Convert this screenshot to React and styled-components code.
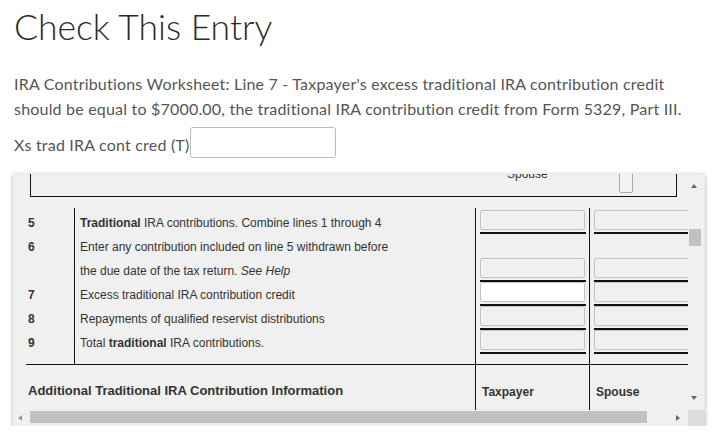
import React from "react";
import styled, { createGlobalStyle } from "styled-components";

const GlobalStyle = createGlobalStyle`
  html, body {
    margin: 0;
    padding: 0;
    background: #fff;
  }
  body {
    font-family: Lato, "Open Sans", sans-serif;
    color: #333;
  }
`;

// rows of the worksheet, number + description + which amount boxes show
const rows = [
  { num: "5", text: <><b>Traditional</b> IRA contributions. Combine lines 1 through 4</>, box: true },
  { num: "6", text: "Enter any contribution included on line 5 withdrawn before", box: false },
  { num: "", text: <>the due date of the tax return. <i>See Help</i></>, box: true },
  { num: "7", text: "Excess traditional IRA contribution credit", box: true, active: true },
  { num: "8", text: "Repayments of qualified reservist distributions", box: true },
  { num: "9", text: <>Total <b>traditional</b> IRA contributions.</>, box: true },
];

function App() {
  return (
    <>
      <GlobalStyle />
      <Page>
        <Title>Check This Entry</Title>
        <Message>
          IRA Contributions Worksheet: Line 7 - Taxpayer's excess traditional IRA contribution credit
          <br />
          should be equal to $7000.00, the traditional IRA contribution credit from Form 5329, Part III.
        </Message>
        <FieldRow>
          <FieldLabel htmlFor="xs-cred">Xs trad IRA cont cred (T)</FieldLabel>
          <FieldInput id="xs-cred" type="text" />
        </FieldRow>

        <Frame>
          <Viewport>
            <Scrolled>
              <HeaderBox>
                <HeaderLabel>Spouse</HeaderLabel>
                <HeaderCheck />
              </HeaderBox>

              <Lines>
                <NumCol>
                  {rows.map((r, i) => (
                    <TextCell key={i}>{r.num}</TextCell>
                  ))}
                </NumCol>
                <DescCol>
                  {rows.map((r, i) => (
                    <TextCell key={i}>{r.text}</TextCell>
                  ))}
                </DescCol>
                <AmountCol>
                  {rows.map((r, i) => (
                    <AmountCell key={i}>
                      {r.box && (
                        <>
                          <AmountBox $active={r.active} />
                          <AmountRule />
                        </>
                      )}
                    </AmountCell>
                  ))}
                </AmountCol>
                <AmountCol>
                  {rows.map((r, i) => (
                    <AmountCell key={i}>
                      {r.box && (
                        <>
                          <AmountBox />
                          <AmountRule />
                        </>
                      )}
                    </AmountCell>
                  ))}
                </AmountCol>
              </Lines>

              <Section>
                <SectionTitle>Additional Traditional IRA Contribution Information</SectionTitle>
                <SectionHead>Taxpayer</SectionHead>
                <SectionHead>Spouse</SectionHead>
              </Section>
            </Scrolled>
          </Viewport>

          <VScroll>
            <Arrow $dir="up" />
            <VThumb />
            <Arrow $dir="down" />
          </VScroll>
          <HScroll>
            <Arrow $dir="left" />
            <HThumb />
            <Arrow $dir="right" />
          </HScroll>
          <Corner />
        </Frame>
      </Page>
    </>
  );
}

const Page = styled.div`
  width: 719px;
  box-sizing: border-box;
  padding: 0 14px;
`;
const Title = styled.h1`
  margin: 6px 0 0;
  font-weight: 300;
  font-size: 35.5px;
  line-height: 1.2;
  color: #2a2a2a;
`;
const Message = styled.p`
  margin: 22px 0 0;
  font-size: 16px;
  letter-spacing: 0.2px;
  line-height: 25px;
  color: #555;
  white-space: nowrap;
`;
const FieldRow = styled.div`
  display: flex;
  align-items: center;
  margin-top: 6px;
`;
const FieldLabel = styled.label`
  font-size: 16px;
  letter-spacing: 0.2px;
  color: #555;
  padding-top: 4px;
`;
const FieldInput = styled.input`
  width: 146px;
  height: 31px;
  box-sizing: border-box;
  margin: 0 0 0 1px;
  border: 1px solid #bdbdbd;
  border-radius: 3px;
  background: #fff;
`;

const Frame = styled.div`
  margin: 16px 0 0 -1px;
  width: 692px;
  height: 252px;
  display: grid;
  grid-template-columns: 675px 17px;
  grid-template-rows: 236px 16px;
  background: #f0f0f0;
  box-shadow: 0 1px 4px rgba(0, 0, 0, 0.35);
  font-family: "Liberation Sans", Arial, sans-serif;
  color: #333;
`;
const Viewport = styled.div`
  overflow: hidden;
`;
const Scrolled = styled.div`
  margin-top: -20px;
  width: 720px;
`;

const HeaderBox = styled.div`
  margin-left: 17px;
  width: 647px;
  height: 43px;
  box-sizing: border-box;
  border: 1px solid #111;
  border-top: none;
  display: flex;
  align-items: flex-end;
  padding-left: 476px;
`;
const HeaderLabel = styled.span`
  width: 40px;
  margin-bottom: 15px;
  font-size: 12px;
  line-height: 14px;
  text-align: center;
`;
const HeaderCheck = styled.span`
  width: 14px;
  height: 24px;
  box-sizing: border-box;
  margin: 0 0 3px 72px;
  border: 1px solid #aaa;
  border-radius: 2px;
  background: #f3f3f3;
`;

const Lines = styled.div`
  display: flex;
  margin: 11px 0 0 13px;
`;
const NumCol = styled.div`
  width: 48px;
  box-sizing: border-box;
  padding: 2px 0 10px 2px;
  font-weight: bold;
`;
const DescCol = styled.div`
  width: 401px;
  box-sizing: border-box;
  padding: 2px 0 10px 5px;
  border-left: 1px solid #111;
`;
const TextCell = styled.div`
  height: 24px;
  box-sizing: border-box;
  padding-top: 1px;
  font-size: 12px;
  line-height: 24px;
  white-space: nowrap;

  b {
    font-weight: bold;
  }
`;
const AmountCol = styled.div`
  width: 114px;
  box-sizing: border-box;
  padding: 2px 4px 10px;
  border-left: 1px solid #111;
`;
const AmountCell = styled.div`
  height: 24px;
`;
const AmountBox = styled.div`
  width: 105px;
  height: 20px;
  box-sizing: border-box;
  border: 1px solid #c2c2c2;
  border-radius: 2px;
  background: ${(p) => (p.$active ? "#fff" : "#f0f0f0")};
`;
const AmountRule = styled.div`
  width: 106px;
  height: 2px;
  margin-top: 2px;
  background: #111;
`;

const Section = styled.div`
  display: flex;
  margin-left: 13px;
  border-top: 1px solid #111;
`;
const SectionTitle = styled.div`
  width: 449px;
  height: 60px;
  box-sizing: border-box;
  padding: 19px 0 0 2px;
  font-size: 13px;
  line-height: 14px;
  font-weight: bold;
`;
const SectionHead = styled.div`
  width: 114px;
  height: 60px;
  box-sizing: border-box;
  padding: 20px 0 0 6px;
  border-left: 1px solid #111;
  font-size: 12px;
  line-height: 14px;
  font-weight: bold;
`;

const VScroll = styled.div`
  display: flex;
  flex-direction: column;
  align-items: flex-start;
  background: #f0f0f0;
`;
const HScroll = styled.div`
  display: flex;
  align-items: center;
  background: #f0f0f0;
`;
const Corner = styled.div`
  background: #dcdcdc;
`;
const VThumb = styled.div`
  width: 12px;
  height: 17px;
  margin: 41px 0 0 1px;
  background: #c1c1c1;
  flex: none;
`;
const HThumb = styled.div`
  width: 617px;
  height: 12px;
  margin-left: 8px;
  align-self: flex-start;
  margin-top: 1px;
  background: #c1c1c1;
`;

const arrowShape = {
  up: "border-left: 3.5px solid transparent; border-right: 3.5px solid transparent; border-bottom: 4px solid #666; margin: 10px 0 0 3px;",
  down: "border-left: 3.5px solid transparent; border-right: 3.5px solid transparent; border-top: 4px solid #666; margin: auto 0 10px 3px;",
  left: "border-top: 3.5px solid transparent; border-bottom: 3.5px solid transparent; border-right: 4px solid #999; margin-left: 5px;",
  right: "border-top: 3.5px solid transparent; border-bottom: 3.5px solid transparent; border-left: 4px solid #666; margin: 0 8px 0 auto;",
};
const Arrow = styled.span`
  width: 0;
  height: 0;
  flex: none;
  ${(p) => arrowShape[p.$dir]}
`;

export default App;
